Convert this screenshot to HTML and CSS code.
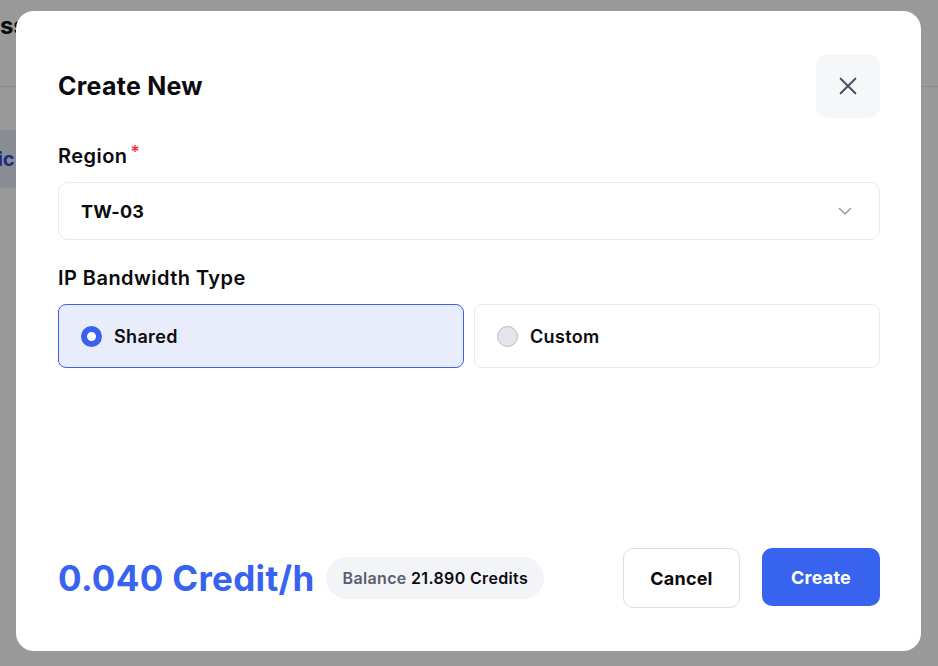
FILE: index.html
```html
<!DOCTYPE html>
<html lang="en">
<head>
<meta charset="utf-8">
<title>Create New</title>
<link rel="stylesheet" href="styles.css">
</head>
<body>
<div class="page">
  <header class="page-header"><span class="page-title">Access</span></header>
  <nav class="page-nav"><span class="nav-item">Public</span></nav>
</div>
<div class="overlay">
  <div class="modal">
    <div class="modal-head">
      <h2 class="modal-title">Create New</h2>
      <button class="close-btn" aria-label="Close">
        <svg width="22" height="22" viewBox="0 0 24 24" fill="none" stroke="#4b5060" stroke-width="2.2" stroke-linecap="round"><path d="M4 4L20 20M20 4L4 20"/></svg>
      </button>
    </div>
    <div class="field">
      <div class="label">Region<span class="req">*</span></div>
      <div class="select">
        <span>TW-03</span>
        <svg width="16" height="16" viewBox="0 0 16 16" fill="none" stroke="#9a9da8" stroke-width="1.6" stroke-linecap="round" stroke-linejoin="round"><path d="M2.5 5.5l5.5 5.5 5.5-5.5"/></svg>
      </div>
    </div>
    <div class="field">
      <div class="label">IP Bandwidth Type</div>
      <div class="options">
        <div class="option active"><span class="radio on"></span>Shared</div>
        <div class="option"><span class="radio"></span>Custom</div>
      </div>
    </div>
    <div class="spacer"></div>
    <div class="modal-foot">
      <div class="price">0.040 Credit/h</div>
      <div class="balance"><span class="bal-label">Balance</span> 21.890 Credits</div>
      <div class="actions">
        <button class="btn btn-cancel">Cancel</button>
        <button class="btn btn-create">Create</button>
      </div>
    </div>
  </div>
</div>
</body>
</html>
```

FILE: styles.css
```css
* { box-sizing: border-box; }
html, body { margin: 0; padding: 0; }
body {
  width: 938px;
  height: 666px;
  overflow: hidden;
  font-family: Inter, "Noto Sans", sans-serif;
  background: #fff;
  color: #111;
}
.page { width: 938px; height: 666px; }
.page-header {
  height: 87px;
  border-bottom: 1px solid #e6e6f4;
  padding-top: 12px;
}
.page-title {
  display: inline-block;
  margin-left: -60px;
  font-size: 24px;
  font-weight: 700;
  line-height: 28px;
}
.page-nav { padding-top: 43px; }
.nav-item {
  display: block;
  width: 120px;
  height: 58px;
  background: #e6e9fb;
  color: #2f4bd6;
  font-weight: 700;
  font-size: 20px;
  line-height: 58px;
  margin-left: -56px;
  padding-left: 10px;
}
.overlay {
  position: fixed;
  inset: 0;
  background: rgba(0, 0, 0, 0.4);
}
.modal {
  position: absolute;
  left: 16px;
  top: 11px;
  width: 905px;
  height: 640px;
  background: #fff;
  border-radius: 18px;
  padding: 43px 41px 43px 42px;
  display: flex;
  flex-direction: column;
}
.modal-head {
  display: flex;
  align-items: center;
  justify-content: space-between;
  height: 64px;
}
.modal-title {
  margin: 0;
  font-size: 25px;
  font-weight: 700;
  letter-spacing: 0.25px;
  color: #0b0b0f;
}
.close-btn {
  width: 64px;
  height: 64px;
  border: none;
  border-radius: 12px;
  background: #f6f7f9;
  display: flex;
  align-items: center;
  justify-content: center;
  padding: 0;
}
.field { margin-top: 26px; }
.label {
  font-size: 20px;
  font-weight: 600;
  line-height: 24px;
  letter-spacing: 0.45px;
  color: #0b0b0f;
  margin-bottom: 14px;
}
.req { color: #ef3340; font-size: 17px; vertical-align: top; margin-left: 3px; line-height: 16px; }
.select {
  height: 58px;
  border: 1px solid #e8e9ec;
  border-radius: 10px;
  display: flex;
  align-items: center;
  justify-content: space-between;
  padding: 0 26px 0 22px;
  font-size: 18px;
  font-weight: 700;
  letter-spacing: 0.2px;
  color: #0b0b0f;
}
.options {
  display: grid;
  grid-template-columns: 1fr 1fr;
  gap: 10px;
}
.option {
  height: 64px;
  border: 1px solid #e8e9ec;
  border-radius: 8px;
  display: flex;
  align-items: center;
  padding-left: 22px;
  font-size: 18px;
  font-weight: 600;
  letter-spacing: 0.35px;
  color: #0b0b0f;
}
.option.active {
  background: #e9edfb;
  border-color: #3a62ef;
}
.radio {
  width: 21px;
  height: 21px;
  border-radius: 50%;
  border: 1px solid #b8bbc4;
  background: #e3e5ea;
  margin-right: 12px;
  flex: none;
}
.radio.on {
  border: 6px solid #3a62ef;
  background: #fff;
}
.spacer { flex: 1; }
.modal-foot {
  display: flex;
  align-items: center;
  height: 60px;
}
.price {
  font-size: 35px;
  font-weight: 700;
  color: #3763f0;
  letter-spacing: 0.3px;
}
.balance {
  margin-left: 12px;
  height: 42px;
  padding: 0 16px;
  border-radius: 21px;
  background: #f3f4f8;
  display: flex;
  align-items: center;
  font-size: 16px;
  font-weight: 600;
  letter-spacing: 0.35px;
  color: #0b0b0f;
  white-space: pre;
}
.bal-label { color: #5a5e6e; }
.actions {
  margin-left: auto;
  display: flex;
  gap: 22px;
}
.btn {
  height: 60px;
  border-radius: 10px;
  font-family: inherit;
  font-size: 18px;
  font-weight: 700;
  letter-spacing: 0.2px;
  padding: 0;
}
.btn-cancel {
  width: 117px;
  background: #fff;
  border: 1px solid #dedfe3;
  color: #0b0b0f;
}
.btn-create {
  width: 118px;
  height: 58px;
  background: #3763ee;
  border: none;
  color: #fff;
}
```
